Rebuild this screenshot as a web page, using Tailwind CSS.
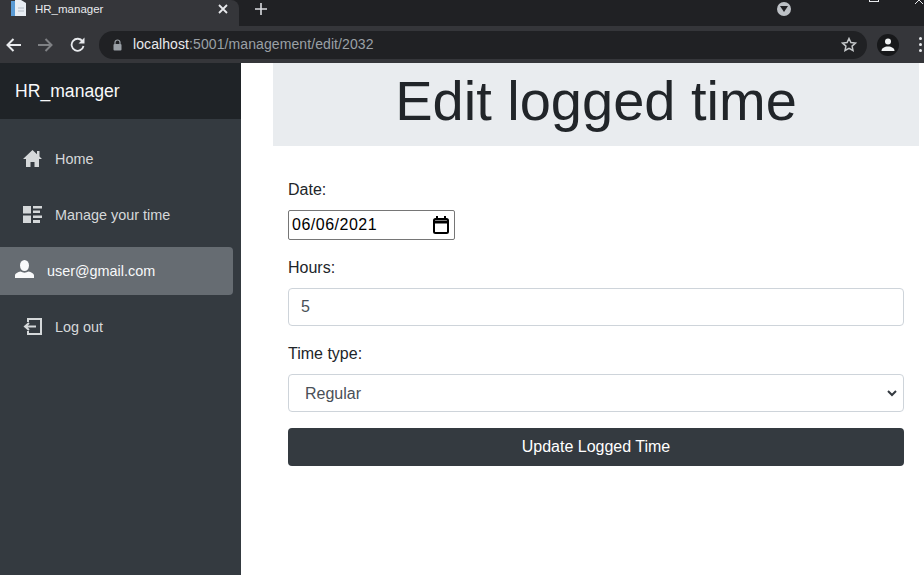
<!DOCTYPE html>
<html lang="en">
<head>
    <meta charset="UTF-8">
    <script src="https://cdn.jsdelivr.net/npm/@tailwindcss/browser@4"></script>
    <title>HR_manager</title>
</head>
<body class="w-[924px] h-[575px] overflow-hidden bg-white font-['Liberation_Sans',sans-serif] text-[#212529]">
    <!-- browser chrome -->
    <div class="h-[26px] bg-[#202124] flex relative overflow-hidden">
        <div class="w-[239px] h-[26px] bg-[#35363a] rounded-tr-lg flex items-center pb-[9px] text-[#e8eaed] text-[11.5px]">
            <svg class="ml-[11px]" width="16" height="17" viewBox="0 0 16 17"><path d="M0 1h5v15H0z" fill="#5a9bd5"/><path d="M4 0h6l5 3v13H4z" fill="#e8edf3"/><path d="M7 8h6M7 11h6" stroke="#b4bcc6"/></svg>
            <span class="ml-2 w-[183px] pt-[2px]">HR_manager</span>
            <svg width="10" height="10" viewBox="0 0 10 10"><path d="M1 1l8 8M9 1l-8 8" stroke="#e8eaed" stroke-width="1.8"/></svg>
        </div>
        <svg class="ml-4 mt-[3px]" width="12" height="12" viewBox="0 0 12 12"><path d="M6 0v12M0 6h12" stroke="#dadce0" stroke-width="1.6"/></svg>
        <div class="absolute left-[777px] top-[2px] w-[14px] h-[14px] rounded-full bg-[#bdc1c6] flex items-center justify-center">
            <svg width="8" height="6" viewBox="0 0 8 6"><path d="M0 0h8L4 6z" fill="#202124"/></svg>
        </div>
        <div class="absolute left-[869px] -top-[8px] w-[10px] h-[10px] border border-[#e8eaed]"></div>
        <svg class="absolute left-[914px] top-0" width="10" height="4" viewBox="0 0 10 4"><path d="M1 4l4-4M5 0l4 4" stroke="#e8eaed"/></svg>
    </div>
    <div class="h-[37px] bg-[#35363a] flex items-center overflow-hidden">
        <svg class="ml-[6px] shrink-0" width="15" height="14" viewBox="0 0 15 14"><path d="M15 7H2M7.5 1L1.5 7l6 6" fill="none" stroke="#e8eaed" stroke-width="2"/></svg>
        <svg class="ml-[17px] shrink-0" width="15" height="14" viewBox="0 0 15 14"><path d="M0 7h13M7.5 1l6 6-6 6" fill="none" stroke="#7f8184" stroke-width="2"/></svg>
        <svg class="ml-[17px] shrink-0" width="15" height="15" viewBox="0 0 15 15"><path d="M12.6 4.4A6 6 0 1 0 13.5 9" fill="none" stroke="#e8eaed" stroke-width="1.8"/><path d="M14.5 0.5v6h-6z" fill="#e8eaed"/></svg>
        <div class="ml-[14px] w-[768px] shrink-0 h-[28px] rounded-full bg-[#202124] flex items-center text-[14px] tracking-[0.09px]">
            <svg class="ml-[14px]" width="9" height="12" viewBox="0 0 9 12"><path d="M2 5V3.500a2.500 2.500 0 0 1 5 0V5" fill="none" stroke="#9aa0a6" stroke-width="1.2"/><rect x="0.500" y="5" width="8" height="6.500" rx="1" fill="#9aa0a6"/></svg>
            <span class="ml-[11px] text-[#e8eaed]">localhost</span><span class="text-[#9aa0a6]">:5001/management/edit/2032</span>
            <svg class="ml-auto mr-[10px]" width="16" height="15" viewBox="0 0 16 15"><path d="M8 1.500l1.900 4.100 4.500.5-3.300 3 .9 4.400L8 11.300l-4 2.200.9-4.400-3.300-3 4.500-.5z" fill="none" stroke="#c4c7c9" stroke-width="1.500"/></svg>
        </div>
        <div class="ml-[10px] shrink-0 w-[22px] h-[22px] rounded-full bg-[#17181a] flex items-center justify-center">
            <svg width="14" height="13" viewBox="0 0 14 13"><circle cx="7" cy="3.500" r="3" fill="#f1f3f4"/><path d="M0.500 13c0-3 3-4.500 6.500-4.500s6.500 1.500 6.500 4.500z" fill="#f1f3f4"/></svg>
        </div>
        <div class="ml-[20px] shrink-0 flex flex-col gap-[3px]">
            <div class="w-[3px] h-[3px] rounded-full bg-[#e8eaed]"></div>
            <div class="w-[3px] h-[3px] rounded-full bg-[#e8eaed]"></div>
            <div class="w-[3px] h-[3px] rounded-full bg-[#e8eaed]"></div>
        </div>
    </div>

    <div class="flex h-[512px]">
        <!-- sidebar -->
        <div class="w-[241px] shrink-0 bg-[#343a40]">
            <div class="h-[56px] bg-[#1f2327] flex items-center pl-[15px] text-[#f8f9fa] text-[17.6px]">HR_manager</div>
            <div class="pt-[16px] pr-2 text-[14.4px] text-[#d6d8da]">
                <div class="h-[48px] mb-2 flex items-center pl-[23px]">
                    <svg class="-mt-[2px]" width="19" height="17" viewBox="0 0 19 17" fill="#d5d8da"><path d="M9.500 0L14 4.200V1h2.500v5.500L19 9h-3v8h-4.500v-5h-4v5H3V9H0z"/></svg>
                    <span class="ml-[13px] pt-[2px]">Home</span>
                </div>
                <div class="h-[48px] mb-2 flex items-center pl-[23px]">
                    <svg class="-mt-[2px]" width="19" height="17" viewBox="0 0 19 17" fill="#d5d8da"><path d="M0 0h8v7.500H0zM0 9.500h8V17H0zM10 0h9v2.500h-9zM10 4.500h7v2.500h-7zM10 9.500h9v2.500h-9zM10 14h7v3h-7z"/></svg>
                    <span class="ml-[13px] pt-[2px]">Manage your time</span>
                </div>
                <div class="h-[48px] mb-2 flex items-center pl-[15px] bg-[#666c72] rounded-r-[4px] text-[#f8f9fa]">
                    <svg class="-mt-[4px]" width="19" height="18" viewBox="0 0 19 18" fill="#f8f9fa"><ellipse cx="9.500" cy="5.500" rx="4.500" ry="5.500"/><path d="M0 18v-2.500c0-2 3-3.500 5.500-4 2.500 1.500 5.500 1.500 8 0 2.500.5 5.500 2 5.500 4V18z"/></svg>
                    <span class="ml-[13px] pt-[2px]">user@gmail.com</span>
                </div>
                <div class="h-[48px] flex items-center pl-[23px]">
                    <svg class="-mt-[2px]" width="19" height="17" viewBox="0 0 19 17" fill="none" stroke="#d5d8da" stroke-width="2"><path d="M5 4V1h13v15H5v-3M13 8.500H2M6 5L2 8.500 6 12"/></svg>
                    <span class="ml-[13px] pt-[2px]">Log out</span>
                </div>
            </div>
        </div>

        <!-- main -->
        <div class="flex-1 pl-[32px] pr-[5px]">
            <h1 class="h-[83px] bg-[#e9ecef] text-center text-[56px] leading-[76px]">Edit logged time</h1>
            <form class="mt-[32px] pl-[15px] pr-[15px] text-[16px]">
                <label class="block leading-6 mb-2">Date:</label>
                <div class="w-[167px] h-[30px] border border-[#767676] rounded-[2px] flex items-center pl-[3px] pr-[5px] text-black">
                    <span class="tracking-[0.5px]">06/06/2021</span>
                    <svg class="ml-auto" width="16" height="18" viewBox="0 0 16 18"><path d="M4 0v3M12 0v3" stroke="#000" stroke-width="2"/><rect x="1" y="3" width="14" height="14" rx="1.500" fill="none" stroke="#000" stroke-width="2"/><path d="M1 6h14" stroke="#000" stroke-width="3"/></svg>
                </div>
                <label class="block leading-6 mt-[16px] mb-2">Hours:</label>
                <div class="h-[38px] border border-[#ced4da] rounded-[4px] flex items-center px-3 text-[#495057]">5</div>
                <label class="block leading-6 mt-[16px] mb-2">Time type:</label>
                <div class="h-[38px] border border-[#ced4da] rounded-[4px] flex items-center pl-4 pr-[6px] text-[#495057]">
                    <span class="pt-[2px]">Regular</span>
                    <svg class="ml-auto" width="10" height="7" viewBox="0 0 10 7"><path d="M1 1l4 4 4-4" fill="none" stroke="#343a40" stroke-width="2"/></svg>
                </div>
                <div class="mt-[16px] h-[38px] rounded-[4px] bg-[#343a40] text-white flex items-center justify-center">Update Logged Time</div>
            </form>
        </div>
    </div>
</body>
</html>
